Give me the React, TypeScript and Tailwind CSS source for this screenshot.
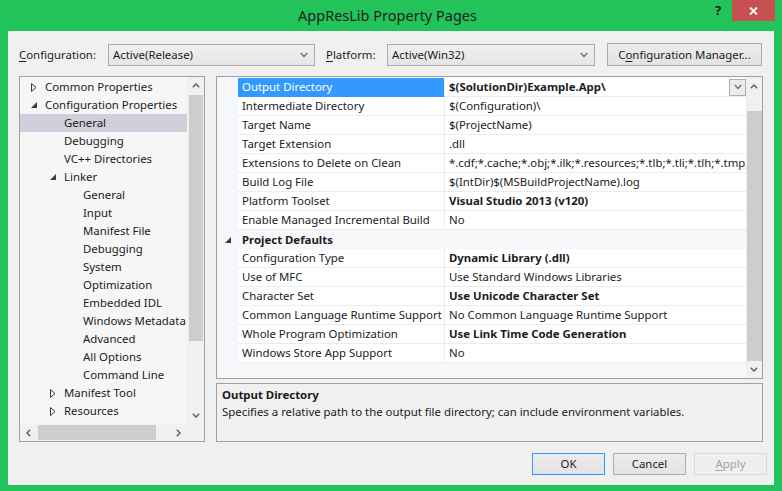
import React from "react";

type Exp = "c" | "e" | null;
const treeItems: { t: string; l: 0 | 1 | 2; e: Exp; sel?: boolean }[] = [
  { t: "Common Properties", l: 0, e: "c" },
  { t: "Configuration Properties", l: 0, e: "e" },
  { t: "General", l: 1, e: null, sel: true },
  { t: "Debugging", l: 1, e: null },
  { t: "VC++ Directories", l: 1, e: null },
  { t: "Linker", l: 1, e: "e" },
  { t: "General", l: 2, e: null },
  { t: "Input", l: 2, e: null },
  { t: "Manifest File", l: 2, e: null },
  { t: "Debugging", l: 2, e: null },
  { t: "System", l: 2, e: null },
  { t: "Optimization", l: 2, e: null },
  { t: "Embedded IDL", l: 2, e: null },
  { t: "Windows Metadata", l: 2, e: null },
  { t: "Advanced", l: 2, e: null },
  { t: "All Options", l: 2, e: null },
  { t: "Command Line", l: 2, e: null },
  { t: "Manifest Tool", l: 1, e: "c" },
  { t: "Resources", l: 1, e: "c" },
];

const padByLevel = ["pl-[10px]", "pl-[29px]", "pl-[48px]"];

type Row = { n: string; v: string; b?: boolean; sel?: boolean };
const rows1: Row[] = [
  { n: "Output Directory", v: "$(SolutionDir)Example.App\\", b: true, sel: true },
  { n: "Intermediate Directory", v: "$(Configuration)\\" },
  { n: "Target Name", v: "$(ProjectName)" },
  { n: "Target Extension", v: ".dll" },
  {
    n: "Extensions to Delete on Clean",
    v: "*.cdf;*.cache;*.obj;*.ilk;*.resources;*.tlb;*.tli;*.tlh;*.tmp;*.r",
  },
  { n: "Build Log File", v: "$(IntDir)$(MSBuildProjectName).log" },
  { n: "Platform Toolset", v: "Visual Studio 2013 (v120)", b: true },
  { n: "Enable Managed Incremental Build", v: "No" },
];
const rows2: Row[] = [
  { n: "Configuration Type", v: "Dynamic Library (.dll)", b: true },
  { n: "Use of MFC", v: "Use Standard Windows Libraries" },
  { n: "Character Set", v: "Use Unicode Character Set", b: true },
  { n: "Common Language Runtime Support", v: "No Common Language Runtime Support" },
  { n: "Whole Program Optimization", v: "Use Link Time Code Generation", b: true },
  { n: "Windows Store App Support", v: "No" },
];

function Chev({ dir, color = "#606060" }: { dir: "up" | "down" | "left" | "right"; color?: string }) {
  if (dir === "up" || dir === "down") {
    const pts = dir === "up" ? "0.8,4.2 4,1 7.2,4.2" : "0.8,0.8 4,4 7.2,0.8";
    return (
      <svg width="8" height="5" viewBox="0 0 8 5">
        <polyline points={pts} fill="none" stroke={color} strokeWidth="1.5" />
      </svg>
    );
  }
  const pts = dir === "left" ? "4.2,0.8 1,4 4.2,7.2" : "0.8,0.8 4,4 0.8,7.2";
  return (
    <svg width="5" height="8" viewBox="0 0 5 8">
      <polyline points={pts} fill="none" stroke={color} strokeWidth="1.5" />
    </svg>
  );
}

function Collapsed() {
  return (
    <svg width="6" height="9" viewBox="0 0 6 9">
      <path d="M0.5 0.5 L5 4.5 L0.5 8.5 Z" fill="none" stroke="#3c3c3c" strokeWidth="1" />
    </svg>
  );
}
function Expanded() {
  return (
    <svg width="6" height="6" viewBox="0 0 6 6">
      <path d="M6 0 L6 6 L0 6 Z" fill="#3c3c3c" />
    </svg>
  );
}

function ComboChev() {
  return (
    <svg width="8" height="6" viewBox="0 0 8 6">
      <polyline points="0.8,1 4,4.5 7.2,1" fill="none" stroke="#707070" strokeWidth="1.4" />
    </svg>
  );
}

function Combo({ text, w }: { text: string; w: string }) {
  return (
    <div
      className={`${w} h-[22px] border border-[#acacac] bg-gradient-to-b from-[#f0f0f0] to-[#e5e5e5] flex items-center pl-[4px] pr-[6px]`}
    >
      <span className="flex-1">{text}</span>
      <ComboChev />
    </div>
  );
}

function Btn({
  children,
  def,
  disabled,
}: {
  children: React.ReactNode;
  def?: boolean;
  disabled?: boolean;
}) {
  const cls = disabled
    ? "border-[#d9d9d9] bg-[#efefef] text-[#a3a3a3]"
    : def
    ? "border-[#3399ff] bg-gradient-to-b from-[#ececec] to-[#e3e3e3]"
    : "border-[#acacac] bg-gradient-to-b from-[#ececec] to-[#e3e3e3]";
  return (
    <div className={`w-[73px] h-[22px] border ${cls} flex items-center justify-center`}>{children}</div>
  );
}

function Tree() {
  return (
    <div className="w-[186px] h-[366px] shrink-0 border border-[#a0a0a0] bg-[#f6f6f6] flex flex-col">
      <div className="flex flex-1 min-h-0">
        <div className="flex-1 min-w-0 pt-[1px] overflow-hidden">
          {treeItems.map((it, i) => (
            <div
              key={i}
              className={`h-[18px] flex items-center whitespace-nowrap ${padByLevel[it.l]} ${
                it.sel ? "bg-[#cfd0db]" : ""
              }`}
            >
              <div className="w-[15px] shrink-0 flex items-center pl-[1px]">
                {it.e === "c" ? <Collapsed /> : it.e === "e" ? <Expanded /> : null}
              </div>
              <span>{it.t}</span>
            </div>
          ))}
        </div>
        <div className="w-[17px] bg-[#f0f0f0] flex flex-col items-center">
          <div className="h-[17px] w-full flex items-center justify-center">
            <Chev dir="up" />
          </div>
          <div className="mt-[1px] h-[246px] w-[14px] bg-[#cdcdcd]" />
          <div className="flex-1" />
          <div className="h-[17px] w-full flex items-center justify-center">
            <Chev dir="down" />
          </div>
        </div>
      </div>
      <div className="h-[17px] flex">
        <div className="flex-1 bg-[#f0f0f0] flex items-center">
          <div className="w-[17px] h-full flex items-center justify-center">
            <Chev dir="left" />
          </div>
          <div className="ml-[1px] w-[118px] h-[15px] bg-[#cdcdcd]" />
          <div className="flex-1" />
          <div className="w-[17px] h-full flex items-center justify-center">
            <Chev dir="right" />
          </div>
        </div>
        <div className="w-[17px] bg-[#f0f0f0]" />
      </div>
    </div>
  );
}

function GridRow({ r }: { r: Row }) {
  return (
    <div className="flex h-[19px]">
      <div className="w-[21px] shrink-0" />
      <div
        className={`w-[207px] shrink-0 border-b border-r border-[#ececec] pl-[4px] flex items-center whitespace-nowrap ${
          r.sel ? "bg-[#3399ff] text-white border-b-[#3399ff]" : "bg-white"
        }`}
      >
        {r.n}
      </div>
      <div className="flex-1 min-w-0 border-b border-[#ececec] bg-white flex items-center overflow-hidden">
        <span className={`pl-[4px] whitespace-nowrap ${r.b ? "font-bold" : ""}`}>{r.v}</span>
        {r.sel && (
          <div className="ml-auto w-[17px] h-[17px] border border-[#acacac] bg-[#ececec] flex items-center justify-center shrink-0">
            <ComboChev />
          </div>
        )}
      </div>
    </div>
  );
}

function Grid() {
  return (
    <div className="w-[547px] h-[303px] border border-[#a0a0a0] bg-[#f5f7fa] flex">
      <div className="flex-1 min-w-0 pt-[1px]">
        {rows1.map((r, i) => (
          <GridRow key={i} r={r} />
        ))}
        <div className="h-[19px] flex items-center">
          <div className="w-[21px] flex items-center pl-[8px]">
            <Expanded />
          </div>
          <span className="pl-[4px] font-bold">Project Defaults</span>
        </div>
        {rows2.map((r, i) => (
          <GridRow key={i} r={r} />
        ))}
      </div>
      <div className="w-[16px] shrink-0 bg-[#f0f0f0] flex flex-col items-center">
        <div className="h-[18px] w-full flex items-center justify-center">
          <Chev dir="up" />
        </div>
        <div className="mt-[16px] h-[250px] w-[15px] bg-[#cdcdcd]" />
        <div className="flex-1 w-full flex items-center justify-center">
          <Chev dir="down" />
        </div>
      </div>
    </div>
  );
}

export default function App() {
  return (
    <div className="w-[782px] h-[491px] bg-[#22c35b] flex flex-col font-['Noto_Sans',sans-serif] text-[11.4px] text-[#1b1b1b] leading-none overflow-hidden">
      {/* Title bar */}
      <div className="h-[31px] flex items-start shrink-0">
        <div className="flex-1" />
        <div className="pt-[8px] text-[14.5px] text-[#1e1e1e] whitespace-nowrap">AppResLib Property Pages</div>
        <div className="flex-1 flex justify-end items-start pr-[7px]">
          <div className="w-[20px] h-[21px] mr-[4px] flex items-center justify-center text-[13px] font-bold text-[#1e1e1e]">
            ?
          </div>
          <div className="w-[43px] h-[21px] bg-[#c75050] flex items-center justify-center">
            <svg width="9" height="8" viewBox="0 0 9 8">
              <path d="M1 0.5 L8 7.5 M8 0.5 L1 7.5" stroke="white" strokeWidth="1.8" />
            </svg>
          </div>
        </div>
      </div>

      {/* Client */}
      <div className="mx-[8px] mb-[6px] flex-1 bg-[#f0f0f0] flex flex-col pl-[11px] pr-[11px] pt-[12px]">
        {/* Config row */}
        <div className="h-[23px] flex items-center">
          <span className="w-[89px]">
            <span className="underline underline-offset-2">C</span>onfiguration:
          </span>
          <Combo text="Active(Release)" w="w-[207px]" />
          <span className="ml-[11px] w-[61px]">
            <span className="underline underline-offset-2">P</span>latform:
          </span>
          <Combo text="Active(Win32)" w="w-[208px]" />
          <div className="ml-[12px] w-[155px] h-[23px] border border-[#acacac] bg-gradient-to-b from-[#ececec] to-[#e3e3e3] flex items-center justify-center">
            C<span className="underline underline-offset-2">o</span>nfiguration Manager...
          </div>
        </div>

        {/* Main */}
        <div className="mt-[10px] flex">
          <Tree />
          <div className="ml-[11px] w-[547px] min-w-0 flex flex-col">
            <Grid />
            <div className="mt-[4px] h-[59px] border border-[#a0a0a0] bg-[#f0f0f0] pl-[5px] pt-[5px]">
              <div className="h-[12px] font-bold leading-[12px]">Output Directory</div>
              <div className="mt-[5px] leading-[12px]">
                Specifies a relative path to the output file directory; can include environment variables.
              </div>
            </div>
          </div>
        </div>

        {/* Buttons */}
        <div className="mt-[11px] mr-[-4px] flex justify-end gap-[8px]">
          <Btn def>OK</Btn>
          <Btn>Cancel</Btn>
          <Btn disabled>
            <span>
              <span className="underline underline-offset-2">A</span>pply
            </span>
          </Btn>
        </div>
      </div>
    </div>
  );
}
